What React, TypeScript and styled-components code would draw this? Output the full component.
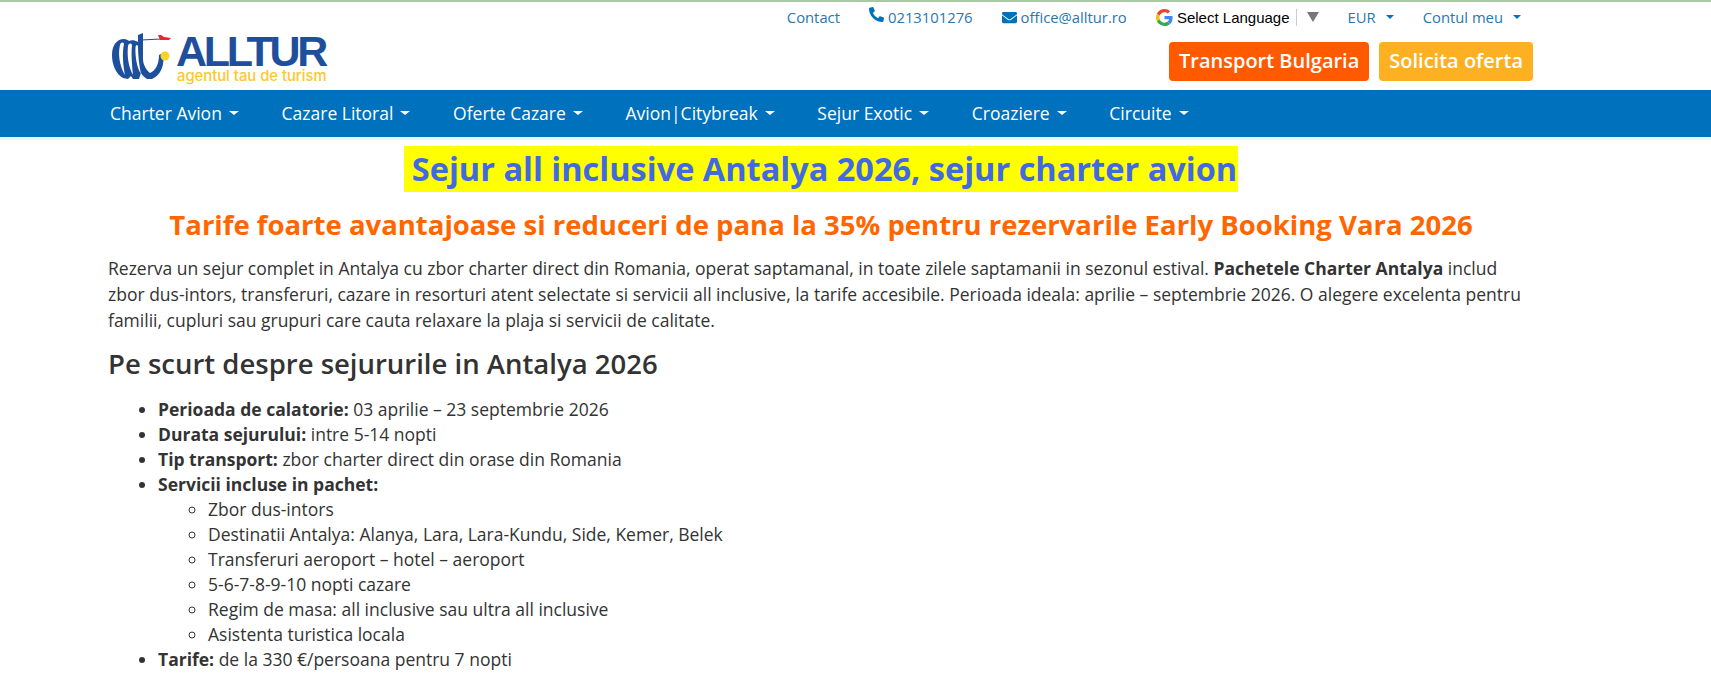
import styled, { createGlobalStyle } from 'styled-components';
import { FaPhoneAlt, FaEnvelope } from 'react-icons/fa';

const Global = createGlobalStyle`
    html, body {
        margin: 0;
        background: #fff;
    }
    body {
        font-family: "Open Sans", sans-serif;
        font-size: 17.5px;
        color: #333;
    }
`;

const Page = styled.div`
    height: 686px;
    overflow: hidden;
    border-top: 2px solid #a9c9a4;
    box-sizing: border-box;
`;

const Container = styled.div`
    width: 1424px;
    margin: 0 auto 0 109px;
`;

const Header = styled(Container)`
    display: flex;
    justify-content: space-between;
    height: 88px;
`;

const Logo = styled.div`
    display: flex;
    align-items: flex-start;
    padding: 31px 0 0 2px;
    gap: 5px;
`;

const LogoText = styled.div`
    display: flex;
    flex-direction: column;
`;

const LogoName = styled.span`
    font-family: "Liberation Sans", sans-serif;
    font-size: 43px;
    line-height: 36px;
    font-weight: 700;
    color: #1d4f9c;
    letter-spacing: -3.3px;
`;

const LogoTag = styled.span`
    font-family: Inter, sans-serif;
    font-size: 14.8px;
    font-weight: 500;
    line-height: 15px;
    margin-left: 1px;
    color: #fcc72c;
`;

const HeaderRight = styled.div`
    display: flex;
    flex-direction: column;
    align-items: flex-end;
`;

const TopLinks = styled.div`
    display: flex;
    align-items: center;
    height: 30px;
    padding-right: 12px;
    font-size: 14.8px;
`;

const TopLink = styled.a`
    display: flex;
    align-items: center;
    gap: 4px;
    margin-left: 29px;
    color: #2a76ae;
`;

const PhoneIcon = styled(FaPhoneAlt)`
    margin-top: -5px;
`;

const Caret = styled.span<{ $color?: string; $half?: number }>`
    display: inline-block;
    width: 0;
    height: 0;
    margin-left: ${p => (p.$half ? 6 : 7)}px;
    border-top: 4px solid ${p => p.$color ?? '#0071bc'};
    border-left: ${p => p.$half ?? 5}px solid transparent;
    border-right: ${p => p.$half ?? 5}px solid transparent;
`;

const Translate = styled.div`
    display: flex;
    align-items: center;
    margin-left: 29px;
    font-family: "Liberation Sans", sans-serif;
    color: #000;
    font-size: 15px;
`;

const TranslateDivider = styled.span`
    display: flex;
    align-items: center;
    margin-left: 6px;
    padding-left: 10px;
    border-left: 1px solid #ccc;
    height: 17px;
`;

const TranslateArrow = styled.span`
    width: 0;
    height: 0;
    border-top: 10px solid #777;
    border-left: 6px solid transparent;
    border-right: 6px solid transparent;
`;

const Buttons = styled.div`
    display: flex;
    gap: 10px;
    margin-top: 10px;
`;

const CtaButton = styled.a<{ $bg: string }>`
    background: ${p => p.$bg};
    color: #fff;
    font-size: 20px;
    font-weight: 600;
    line-height: 37px;
    padding: 0 10px 2px;
    border-radius: 4px;
`;

const NavBar = styled.nav`
    background: #0071bc;
    height: 47px;
    border-bottom: 3px solid #e6f7f7;
    box-sizing: content-box;
`;

const NavInner = styled(Container)`
    display: flex;
    align-items: center;
    gap: 42.7px;
    height: 45px;
    padding: 0 0 2px 1px;
`;

const NavItem = styled.a`
    display: flex;
    align-items: center;
    color: #fff;
    font-size: 17.5px;
`;

const Main = styled(Container)`
    padding-top: 6px;
`;

const Title = styled.h1`
    margin: 0;
    text-align: center;
    font-size: 32.5px;
    line-height: 46px;
    font-weight: 700;
    color: #4169e1;
`;

const Mark = styled.span`
    background: #ff0;
    padding: 0 1px 0 8px;
    display: inline-block;
`;

const Subtitle = styled.h2`
    margin: 13px 0 0;
    text-align: center;
    font-size: 27.5px;
    line-height: 40px;
    font-weight: 700;
    color: #ff6600;
`;

const Lead = styled.p`
    margin: 10px 0 0 -1px;
    line-height: 26px;
`;

const Section = styled.h3`
    margin: 13px 0 0 -1px;
    font-size: 27.5px;
    line-height: 36px;
    font-weight: 600;
`;

const List = styled.ul`
    margin: 15px 0 0 -1px;
    padding-left: 50px;
    line-height: 25px;
`;

const SubList = styled.ul`
    margin: 0;
    padding-left: 50px;
    list-style: circle;
`;

const navItems = ['Charter Avion', 'Cazare Litoral', 'Oferte Cazare', 'Avion|Citybreak', 'Sejur Exotic', 'Croaziere', 'Circuite'];
const included = [
    'Zbor dus-intors',
    'Destinatii Antalya: Alanya, Lara, Lara-Kundu, Side, Kemer, Belek',
    'Transferuri aeroport – hotel – aeroport',
    '5-6-7-8-9-10 nopti cazare',
    'Regim de masa: all inclusive sau ultra all inclusive',
    'Asistenta turistica locala',
];

function AlltourMark() {
    return (
        <svg width="60" height="47" viewBox="0 0 60 47" fill="none">
            <path d="M1 22 C1 12 6 6 13 6 C15 6 17 7 18 8 C20 7 24 7 27 9 L27 2 L32 0 L32 26 C32 32 36 38 39 40 C44 38 48 32 48 22 L52 20 C54 32 50 42 41 46 L36 46 C33 44 31 42 30 40 L28 46 L22 46 L20 43 L17 46 L12 45 C5 41 1 32 1 22Z" fill="#1d4f9c" />
            <path d="M9 12 C7 20 8 32 14 42 C12 32 11 20 13 11 C12 9 10 9 9 12Z" fill="#fff" />
            <path d="M17 13 C16 22 17 33 22 42 C21 32 20 20 21 12 C20 10 18 10 17 13Z" fill="#fff" />
            <path d="M24.500 14 C24 24 26 35 30 41 C28 32 27 22 27 13 C26 11 25 12 24.500 14Z" fill="#fff" />
            <path d="M30 7 L50 6" stroke="#1d4f9c" strokeWidth="1.200" />
            <path d="M47 2 L50 2 L53 4 L60 5 L58 7 L49 7Z" fill="#e8272c" />
            <circle cx="54" cy="23" r="4.500" fill="#f5d327" />
        </svg>
    );
}

function GoogleG() {
    return (
        <svg width="17" height="17" viewBox="0 0 48 48">
            <path fill="#EA4335" d="M24 9.500c3.500 0 6.700 1.300 9.100 3.500l6.800-6.800C35.800 2.400 30.300 0 24 0 14.600 0 6.500 5.400 2.600 13.200l7.900 6.100C12.400 13.700 17.700 9.500 24 9.500z" />
            <path fill="#4285F4" d="M46.900 24.500c0-1.600-.2-3.100-.4-4.500H24v9h12.900c-.6 3-2.200 5.500-4.700 7.200l7.700 6c4.500-4.200 7-10.300 7-17.700z" />
            <path fill="#FBBC05" d="M10.500 28.700c-.5-1.500-.8-3-.8-4.700s.3-3.200.8-4.700l-7.900-6.100C.900 16.500 0 20.100 0 24s.9 7.500 2.600 10.800l7.900-6.100z" />
            <path fill="#34A853" d="M24 48c6.500 0 11.900-2.100 15.900-5.800l-7.700-6c-2.200 1.400-4.900 2.300-8.200 2.300-6.300 0-11.600-4.200-13.500-9.800l-7.900 6.100C6.500 42.600 14.600 48 24 48z" />
        </svg>
    );
}

export default function App() {
    return (
        <Page>
            <Global />
            <Header>
                <Logo>
                    <AlltourMark />
                    <LogoText>
                        <LogoName>ALLTUR</LogoName>
                        <LogoTag>agentul tau de turism</LogoTag>
                    </LogoText>
                </Logo>
                <HeaderRight>
                    <TopLinks>
                        <TopLink>Contact</TopLink>
                        <TopLink><PhoneIcon size={15} color="#0071bc" />0213101276</TopLink>
                        <TopLink><FaEnvelope size={15} color="#0071bc" />office@alltur.ro</TopLink>
                        <Translate><GoogleG />&nbsp;Select Language<TranslateDivider><TranslateArrow /></TranslateDivider></Translate>
                        <TopLink>EUR<Caret $half={4} /></TopLink>
                        <TopLink>Contul meu<Caret $half={4} /></TopLink>
                    </TopLinks>
                    <Buttons>
                        <CtaButton $bg="#ff5a00">Transport Bulgaria</CtaButton>
                        <CtaButton $bg="#fdb022">Solicita oferta</CtaButton>
                    </Buttons>
                </HeaderRight>
            </Header>
            <NavBar>
                <NavInner>
                    {navItems.map(item => (
                        <NavItem key={item}>{item}<Caret $color="#fff" /></NavItem>
                    ))}
                </NavInner>
            </NavBar>
            <Main>
                <Title><Mark>Sejur all inclusive Antalya 2026, sejur charter avion</Mark></Title>
                <Subtitle>Tarife foarte avantajoase si reduceri de pana la 35% pentru rezervarile Early Booking Vara 2026</Subtitle>
                <Lead>
                    Rezerva un sejur complet in Antalya cu zbor charter direct din Romania, operat saptamanal, in toate zilele saptamanii in sezonul estival. <strong>Pachetele Charter Antalya</strong> includ zbor dus-intors, transferuri, cazare in resorturi atent selectate si servicii all inclusive, la tarife accesibile. Perioada ideala: aprilie – septembrie 2026. O alegere excelenta pentru familii, cupluri sau grupuri care cauta relaxare la plaja si servicii de calitate.
                </Lead>
                <Section>Pe scurt despre sejururile in Antalya 2026</Section>
                <List>
                    <li><strong>Perioada de calatorie:</strong> 03 aprilie – 23 septembrie 2026</li>
                    <li><strong>Durata sejurului:</strong> intre 5-14 nopti</li>
                    <li><strong>Tip transport:</strong> zbor charter direct din orase din Romania</li>
                    <li>
                        <strong>Servicii incluse in pachet:</strong>
                        <SubList>
                            {included.map(line => <li key={line}>{line}</li>)}
                        </SubList>
                    </li>
                    <li><strong>Tarife:</strong> de la 330 €/persoana pentru 7 nopti</li>
                </List>
            </Main>
        </Page>
    );
}
